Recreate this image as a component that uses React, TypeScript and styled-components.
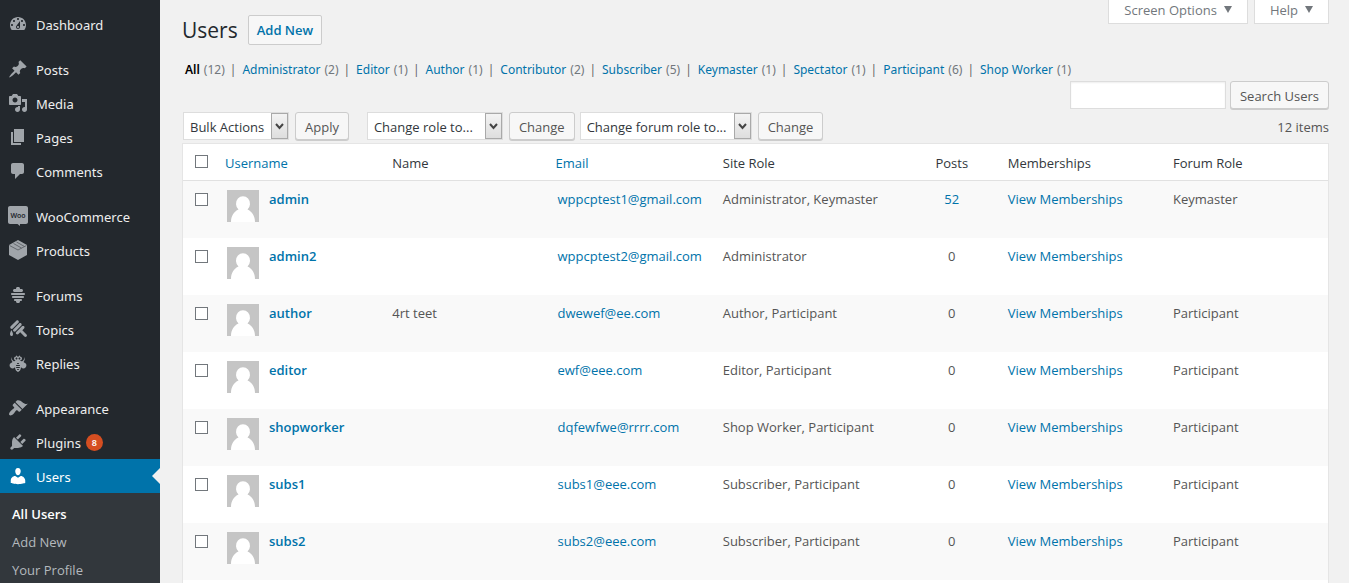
import React from "react";
import styled, { createGlobalStyle, css } from "styled-components";

const GlobalStyle = createGlobalStyle`
  * { box-sizing: border-box; }
  body {
    margin: 0;
    background: #f1f1f1;
    color: #444;
    font-family: "Open Sans", "Noto Sans", sans-serif;
    font-size: 13px;
    line-height: 18px;
  }
  a { color: #0073aa; text-decoration: none; }
  ul { list-style: none; margin: 0; padding: 0; }
`;

/* ---------- shell ---------- */

const Shell = styled.div`
  display: flex;
  height: 100vh;
  overflow: hidden;
`;

const Sidebar = styled.nav`
  flex: none;
  width: 160px;
  padding-top: 7px;
  background: #23282d;
`;

const MenuItem = styled.li<{ $first?: boolean }>`
  ${(p) => p.$first && css`margin-top: 11px;`}
`;

const MenuLink = styled.a<{ $current?: boolean }>`
  display: flex;
  align-items: center;
  height: 34px;
  padding: 0 0 0 8px;
  color: ${(p) => (p.$current ? "#fff" : "#eee")};
  background: ${(p) => (p.$current ? "#0073aa" : "transparent")};
  fill: ${(p) => (p.$current ? "#fff" : "#a0a5aa")};
  font-family: "Noto Sans", "Open Sans", sans-serif;
  ${(p) =>
    p.$current &&
    css`
      &::after {
        content: "";
        margin-left: auto;
        border: 8px solid transparent;
        border-right-color: #f1f1f1;
      }
    `}
`;

const MenuIcon = styled.svg`
  flex: none;
  width: 20px;
  height: 20px;
`;

const MenuLabel = styled.span`
  padding: 2px 5px 0 8px;
`;

const CountBadge = styled.span`
  min-width: 17px;
  border-radius: 9px;
  background: #d54e21;
  color: #fff;
  font-size: 9px;
  font-weight: 600;
  line-height: 17px;
  text-align: center;
`;

const SubMenu = styled.ul`
  padding: 7px 0;
  background: #32373c;
`;

const SubLink = styled.a<{ $current?: boolean }>`
  display: block;
  padding: 5px 12px;
  font-weight: ${(p) => (p.$current ? 600 : 400)};
  color: ${(p) => (p.$current ? "#fff" : "#b4b9be")};
`;

const Main = styled.main`
  flex: 1;
  min-width: 0;
  display: flex;
  flex-direction: column;
  padding: 0 20px 0 22px;
`;

/* ---------- page head ---------- */

const PageHead = styled.header`
  display: flex;
  align-items: flex-start;
  height: 58px;
`;

const Title = styled.h1`
  margin: 0;
  padding-top: 15px;
  color: #23282d;
  font-size: 21px;
  font-weight: 400;
  line-height: 30px;
`;

const AddNew = styled.a`
  margin: 15px auto 0 10px;
  padding: 5px 8px;
  border: 1px solid #ccc;
  border-radius: 2px;
  background: #f7f7f7;
  font-weight: 600;
`;

const MetaTabs = styled.div`
  display: flex;
  gap: 6px;
`;

const MetaTab = styled.button`
  display: flex;
  align-items: center;
  gap: 7px;
  height: 24px;
  padding: 0 15px 4px;
  border: 1px solid #ddd;
  border-top: 0;
  background: #fff;
  color: #72777c;
  font: inherit;

  &::after {
    content: "";
    border: 4px solid transparent;
    border-top: 7px solid #72777c;
    border-bottom: 0;
  }
`;

const Filters = styled.ul`
  display: flex;
  height: 23px;
  padding: 3px 3px 0;
  font-family: "Noto Sans", "Open Sans", sans-serif;
  font-size: 12px;
`;

const Filter = styled.li`
  display: flex;
  gap: 4px;
  & + &::before {
    content: "|";
    margin: 0 2px 0 5px;
    color: #666;
  }
`;

const FilterLink = styled.a<{ $current?: boolean }>`
  ${(p) => p.$current && css`color: #000; font-weight: 600;`}
`;

const FilterCount = styled.span`
  color: #72777c;
`;

/* ---------- controls ---------- */

const Button = styled.button`
  height: 28px;
  padding: 1px 9px 0;
  border: 1px solid #ccc;
  border-radius: 3px;
  background: #f7f7f7;
  box-shadow: 0 1px 0 #ccc;
  color: #555;
  font: inherit;
  white-space: nowrap;
`;

const SearchRow = styled.form`
  display: flex;
  justify-content: flex-end;
  gap: 4px;
`;

const SearchInput = styled.input`
  width: 156px;
  height: 28px;
  border: 1px solid #ddd;
  background: #fff;
  box-shadow: inset 0 1px 2px rgba(0, 0, 0, 0.07);
  font: inherit;
`;

const Toolbar = styled.div`
  display: flex;
  align-items: center;
  height: 28px;
  margin: 3px 0;
  padding-left: 1px;
`;

const Group = styled.div<{ $gap: number }>`
  display: flex;
  gap: 6px;
  margin-right: ${(p) => p.$gap}px;
`;

const SelectBox = styled.label<{ $width: number }>`
  display: grid;
  grid-template-columns: 1fr 17px;
  width: ${(p) => p.$width}px;
  height: 28px;
  border: 1px solid #ddd;
  background: #fff;
`;

const Select = styled.select`
  grid-area: 1 / 1 / 2 / 3;
  min-width: 0;
  padding: 2px 0 0 6px;
  border: 0;
  background: transparent;
  appearance: none;
  color: #32373c;
  font: inherit;
`;

const DropMark = styled.svg`
  grid-area: 1 / 2;
  width: 17px;
  height: 26px;
  border: 1px solid #a9a9a9;
  background: linear-gradient(#f3f3f3, #dedede);
  pointer-events: none;
`;

const ItemCount = styled.span`
  margin-left: auto;
  padding-top: 2px;
  color: #555;
`;

/* ---------- table ---------- */

const Panel = styled.section`
  flex: 1;
  border: 1px solid #e5e5e5;
  border-bottom: 0;
  background: #fff;
`;

const Table = styled.table`
  width: 100%;
  table-layout: fixed;
  border-collapse: separate;
  border-spacing: 0;
`;

const Col = styled.col<{ $width?: number }>`
  ${(p) => p.$width && css`width: ${p.$width}px;`}
`;

const HeadCell = styled.th<{ $align?: string; $sortable?: boolean }>`
  height: 37px;
  padding: 2px 8px 0 ${(p) => (p.$sortable ? 6 : 8)}px;
  border-bottom: 1px solid #e1e1e1;
  color: #32373c;
  font-weight: 400;
  text-align: ${(p) => p.$align || "left"};
`;

const Row = styled.tr`
  height: 57px;
  &:nth-child(odd) { background: #f9f9f9; }
`;

const Cell = styled.td<{ $align?: string }>`
  padding: 9px 8px;
  color: #555;
  text-align: ${(p) => p.$align || "left"};
  vertical-align: top;
  white-space: nowrap;
`;

const Check = styled.input`
  display: block;
  width: 13px;
  height: 13px;
  margin: 3px 0 0 4px;
  border: 1px solid #72777c;
  background: #fff;
  appearance: none;
`;

const HeadCheck = styled(Check)`
  margin-top: 0;
  margin-bottom: 4px;
`;

const UserBox = styled.div`
  display: flex;
  gap: 10px;
`;

const Avatar = styled.svg`
  flex: none;
  width: 32px;
  height: 32px;
`;

const UserLink = styled.a`
  font-weight: 600;
`;

/* ---------- data ---------- */

const icons: Record<string, React.ReactNode> = {
  dashboard: <path d="M3.76 16h12.48c1.1-1.37 1.76-3.11 1.76-5 0-4.42-3.58-8-8-8s-8 3.58-8 8c0 1.89.66 3.63 1.76 5zM10 4c.55 0 1 .45 1 1s-.45 1-1 1-1-.45-1-1 .45-1 1-1zM6 6c.55 0 1 .45 1 1s-.45 1-1 1-1-.45-1-1 .45-1 1-1zm8 0c.55 0 1 .45 1 1s-.45 1-1 1-1-.45-1-1 .45-1 1-1zm-5.37 5.55L12 7v6c0 1.1-.9 2-2 2s-2-.9-2-2c0-.57.24-1.08.63-1.45zM4 10c.55 0 1 .45 1 1s-.45 1-1 1-1-.45-1-1 .45-1 1-1zm12 0c.55 0 1 .45 1 1s-.45 1-1 1-1-.45-1-1 .45-1 1-1zm-5 3c0-.55-.45-1-1-1s-1 .45-1 1 .45 1 1 1 1-.45 1-1z" />,
  posts: <path d="M10.44 3.02l1.82-1.82 6.36 6.35-1.83 1.82c-1.05-.68-2.48-.57-3.41.36l-.75.75c-.92.93-1.04 2.35-.35 3.41l-1.83 1.82-2.41-2.41-2.8 2.79c-.42.42-3.38 2.71-3.8 2.29s1.86-3.39 2.28-3.81l2.79-2.79L4.1 9.36l1.83-1.82c1.05.69 2.48.57 3.4-.36l.75-.75c.93-.92 1.05-2.35.36-3.41z" />,
  media: <path d="M13 11V4c0-.55-.45-1-1-1h-1.67L9 1H5L3.67 3H2c-.55 0-1 .45-1 1v7c0 .55.45 1 1 1h10c.55 0 1-.45 1-1zM7 4.5c1.38 0 2.5 1.12 2.5 2.5S8.38 9.5 7 9.5 4.5 8.38 4.5 7 5.62 4.5 7 4.5zM14 6h5v10.5c0 1.38-1.12 2.5-2.5 2.5S14 17.88 14 16.5s1.12-2.5 2.5-2.5c.17 0 .34.02.5.05V9h-3V6zm-4 8.05V13h2v3.5c0 1.38-1.12 2.5-2.5 2.5S7 17.88 7 16.5 8.12 14 9.5 14c.17 0 .34.02.5.05z" />,
  pages: <path d="M6 15V2h10v13H6zm-1 1h8v2H3V5h2v11z" />,
  comments: <path d="M5 2h9c1.1 0 2 .9 2 2v7c0 1.1-.9 2-2 2h-2l-5 5v-5H5c-1.1 0-2-.9-2-2V4c0-1.1.9-2 2-2z" />,
  woo: (
    <>
      <path d="M2 0h16c1.1 0 2 .9 2 2v14c0 1.100-.9 2-2 2h-6v2l-2.500-2H2c-1.100 0-2-.9-2-2V2C0 .9.9 0 2 0z" />
      <text x="10" y="12" textAnchor="middle" fontSize="7" fontWeight="600" fill="#23282d">Woo</text>
    </>
  ),
  products: (
    <>
      <path d="M10 0l9 5v10l-9 5-9-5V5z" />
      <path d="M1.500 5.500L10 10l8.500-4.500M5.500 3.500l8 4.500M8.500 2l8 4.500" fill="none" stroke="#4a4f54" strokeWidth="0.700" />
    </>
  ),
  forums: <path d="M13.5 7h-7C5.67 7 5 6.33 5 5.5S5.67 4 6.5 4h1.59C8.04 3.84 8 3.68 8 3.5 8 2.67 8.67 2 9.5 2h1c.83 0 1.500.67 1.500 1.500 0 .18-.04.34-.09.5h1.590c.83 0 1.500.67 1.500 1.500S14.330 7 13.500 7zM4 8h12c.55 0 1 .45 1 1s-.45 1-1 1H4c-.55 0-1-.45-1-1s.45-1 1-1zm1 3h10c.55 0 1 .45 1 1s-.45 1-1 1H5c-.55 0-1-.45-1-1s.45-1 1-1zm2 3h6c.55 0 1 .45 1 1s-.45 1-1 1h-1.090c.05.16.09.32.09.5 0 .83-.67 1.500-1.500 1.500h-1c-.83 0-1.500-.67-1.500-1.500 0-.18.04-.34.09-.5H7c-.55 0-1-.45-1-1s.45-1 1-1z" />,
  topics: <path d="M10.44 1.66c-.59-.58-1.54-.58-2.12 0L2.66 7.32c-.58.58-.58 1.53 0 2.12.6.6 1.56.56 2.12 0l5.66-5.66c.58-.58.59-1.53 0-2.12zm2.83 2.83c-.59-.59-1.54-.59-2.12 0l-5.66 5.66c-.59.58-.59 1.53 0 2.12.6.6 1.56.55 2.12 0l5.66-5.66c.58-.58.58-1.53 0-2.12zm1.06 6.72l4.18 4.18c.59.58.59 1.53 0 2.12s-1.54.59-2.12 0l-4.18-4.18-1.77 1.77c-.59.58-1.54.58-2.12 0-.59-.59-.59-1.54 0-2.13l5.66-5.65c.58-.59 1.53-.59 2.12 0 .58.58.58 1.53 0 2.12zM5 15c0-1.59-1.66-4-1.66-4S2 13.78 2 15s.6 2 1.34 2h.32C4.4 17 5 16.59 5 15z" />,
  replies: <path d="M17.54 10.29c1.17 1.17 1.17 3.08 0 4.25-1.18 1.17-3.08 1.17-4.25 0l-.34-.52c0 3.66-2 4.38-2.95 4.98-.82-.6-2.95-1.28-2.95-4.98l-.34.52c-1.17 1.17-3.07 1.17-4.25 0-1.17-1.17-1.17-3.08 0-4.25 0 0 1.02-.67 2.1-1.3C3.71 7.84 3.2 6.42 3.2 4.88c0-.34.03-.67.08-1C3.53 5.66 4.47 7.22 5.8 8.3c.67-.35 1.85-.83 2.37-.92H8c-1.1 0-2-.9-2-2s.9-2 2-2v-.5c0-.28.22-.5.5-.5s.5.22.5.5v.5h2v-.5c0-.28.22-.5.5-.5s.5.22.5.5v.5c1.1 0 2 .9 2 2s-.9 2-2 2h-.17c.51.09 1.78.61 2.38.92 1.33-1.08 2.27-2.64 2.52-4.42.05.33.08.66.08 1 0 1.54-.51 2.96-1.36 4.11 1.08.63 2.09 1.3 2.09 1.3zM8.5 6.38c.5 0 1-.5 1-1s-.5-1-1-1-1 .5-1 1 .5 1 1 1zm3-2c-.5 0-1 .5-1 1s.5 1 1 1 1-.5 1-1-.5-1-1-1zm-2.3 5.73c-.12.11-.19.26-.19.43.02.25.23.46.49.46h1c.26 0 .47-.21.49-.46 0-.15-.07-.29-.19-.43-.08-.06-.18-.11-.3-.11h-1c-.12 0-.22.05-.3.11zM12 12.5c0-.12-.06-.28-.19-.38-.09-.07-.19-.12-.31-.12h-3c-.12 0-.22.05-.31.12-.11.1-.19.25-.19.38 0 .28.22.5.5.5h3c.28 0 .5-.22.5-.5zM8.5 15h3c.28 0 .5-.22.5-.5s-.22-.5-.5-.5h-3c-.28 0-.5.22-.5.5s.22.5.5.5zm1 2h1c.28 0 .5-.22.5-.5s-.22-.5-.5-.5h-1c-.28 0-.5.22-.5.5s.22.5.5.5z" />,
  appearance: <path d="M14.48 11.06L7.41 3.99l1.5-1.5c.5-.56 2.3-.47 3.51.32 1.21.8 1.43 1.28 2.91 2.1 1.18.64 2.45 1.26 4.45.85zm-.71.71L6.7 4.7 4.93 6.47c-.39.39-.39 1.02 0 1.41l1.06 1.06c.39.39.39 1.03 0 1.42-.6.6-1.43 1.11-2.21 1.69-.35.26-.7.53-1.01.84C1.43 14.23.4 16.08 1.4 17.07c.99 1 2.84-.03 4.18-1.36.31-.31.58-.66.85-1.02.57-.78 1.08-1.61 1.69-2.21.39-.39 1.02-.39 1.41 0l1.06 1.06c.39.39 1.02.39 1.41 0z" />,
  plugins: <path d="M13.11 4.36L9.87 7.6 8 5.73l3.24-3.24c.35-.34 1.05-.2 1.56.32.52.51.66 1.21.31 1.55zm-8 1.77l.91-1.12 9.01 9.01-1.19.84c-.71.71-2.63 1.16-3.82 1.16H6.14L4.9 17.26c-.59.59-1.54.59-2.12 0-.59-.58-.59-1.53 0-2.12l1.24-1.24v-3.88c0-1.13.4-3.19 1.09-3.89zm7.26 3.97l3.24-3.24c.34-.35 1.04-.21 1.55.31.52.51.66 1.21.31 1.55l-3.24 3.25z" />,
  users: <path d="M10 9.25c-2.27 0-2.73-3.44-2.73-3.44C7 4.02 7.82 2 9.97 2c2.16 0 2.98 2.02 2.71 3.81 0 0-.41 3.44-2.68 3.44zm0 2.57L12.72 10c2.39 0 4.52 2.33 4.52 4.53v2.49s-3.65 1.13-7.24 1.13c-3.65 0-7.24-1.13-7.24-1.13v-2.49c0-2.25 1.94-4.48 4.47-4.48z" />,
};

const menu: { icon: string; label: string; first?: boolean; count?: number }[] = [
  { icon: "dashboard", label: "Dashboard" },
  { icon: "posts", label: "Posts", first: true },
  { icon: "media", label: "Media" },
  { icon: "pages", label: "Pages" },
  { icon: "comments", label: "Comments" },
  { icon: "woo", label: "WooCommerce", first: true },
  { icon: "products", label: "Products" },
  { icon: "forums", label: "Forums", first: true },
  { icon: "topics", label: "Topics" },
  { icon: "replies", label: "Replies" },
  { icon: "appearance", label: "Appearance", first: true },
  { icon: "plugins", label: "Plugins", count: 8 },
  { icon: "users", label: "Users" },
];

const filters: [string, number][] = [
  ["All", 12],
  ["Administrator", 2],
  ["Editor", 1],
  ["Author", 1],
  ["Contributor", 2],
  ["Subscriber", 5],
  ["Keymaster", 1],
  ["Spectator", 1],
  ["Participant", 6],
  ["Shop Worker", 1],
];

const users = [
  { login: "admin", name: "", email: "wppcptest1@gmail.com", role: "Administrator, Keymaster", posts: 52, forum: "Keymaster" },
  { login: "admin2", name: "", email: "wppcptest2@gmail.com", role: "Administrator", posts: 0, forum: "" },
  { login: "author", name: "4rt teet", email: "dwewef@ee.com", role: "Author, Participant", posts: 0, forum: "Participant" },
  { login: "editor", name: "", email: "ewf@eee.com", role: "Editor, Participant", posts: 0, forum: "Participant" },
  { login: "shopworker", name: "", email: "dqfewfwe@rrrr.com", role: "Shop Worker, Participant", posts: 0, forum: "Participant" },
  { login: "subs1", name: "", email: "subs1@eee.com", role: "Subscriber, Participant", posts: 0, forum: "Participant" },
  { login: "subs2", name: "", email: "subs2@eee.com", role: "Subscriber, Participant", posts: 0, forum: "Participant" },
];

function DropDown({ label, width }: { label: string; width: number }) {
  return (
    <SelectBox $width={width}>
      <Select aria-label={label}>
        <option>{label}</option>
      </Select>
      <DropMark viewBox="0 0 15 24" aria-hidden="true">
        <path d="M4 10l3.500 4L11 10" fill="none" stroke="#444" strokeWidth="2" />
      </DropMark>
    </SelectBox>
  );
}

export default function App() {
  return (
    <>
      <GlobalStyle />
      <Shell>
        <Sidebar aria-label="Main menu">
          <ul>
            {menu.map((m) => (
              <MenuItem key={m.label} $first={m.first}>
                <MenuLink href="#" $current={m.label === "Users"}>
                  <MenuIcon viewBox="0 0 20 20" aria-hidden="true">{icons[m.icon]}</MenuIcon>
                  <MenuLabel>{m.label}</MenuLabel>
                  {m.count && <CountBadge>{m.count}</CountBadge>}
                </MenuLink>
              </MenuItem>
            ))}
          </ul>
          <SubMenu>
            <li><SubLink href="#" $current>All Users</SubLink></li>
            <li><SubLink href="#">Add New</SubLink></li>
            <li><SubLink href="#">Your Profile</SubLink></li>
          </SubMenu>
        </Sidebar>
        <Main>
          <PageHead>
            <Title>Users</Title>
            <AddNew href="#">Add New</AddNew>
            <MetaTabs>
              <MetaTab type="button">Screen Options</MetaTab>
              <MetaTab type="button">Help</MetaTab>
            </MetaTabs>
          </PageHead>
          <Filters>
            {filters.map(([label, count]) => (
              <Filter key={label}>
                <FilterLink href="#" $current={label === "All"}>{label}</FilterLink>
                <FilterCount>({count})</FilterCount>
              </Filter>
            ))}
          </Filters>
          <SearchRow>
            <SearchInput type="search" aria-label="Search Users" />
            <Button type="button">Search Users</Button>
          </SearchRow>
          <Toolbar>
            <Group $gap={18}>
              <DropDown label="Bulk Actions" width={106} />
              <Button type="button">Apply</Button>
            </Group>
            <Group $gap={5}>
              <DropDown label="Change role to..." width={136} />
              <Button type="button">Change</Button>
            </Group>
            <Group $gap={0}>
              <DropDown label="Change forum role to..." width={172} />
              <Button type="button">Change</Button>
            </Group>
            <ItemCount>12 items</ItemCount>
          </Toolbar>
          <Panel>
            <Table>
              <colgroup>
                <Col $width={36} />
                <Col />
                <Col />
                <Col />
                <Col $width={189} />
                <Col $width={96} />
                <Col />
                <Col $width={163} />
              </colgroup>
              <thead>
                <tr>
                  <HeadCell><HeadCheck type="checkbox" aria-label="Select all" /></HeadCell>
                  <HeadCell $sortable><a href="#">Username</a></HeadCell>
                  <HeadCell>Name</HeadCell>
                  <HeadCell $sortable><a href="#">Email</a></HeadCell>
                  <HeadCell>Site Role</HeadCell>
                  <HeadCell $align="center">Posts</HeadCell>
                  <HeadCell>Memberships</HeadCell>
                  <HeadCell>Forum Role</HeadCell>
                </tr>
              </thead>
              <tbody>
                {users.map((u) => (
                  <Row key={u.login}>
                    <Cell><Check type="checkbox" aria-label={"Select " + u.login} /></Cell>
                    <Cell>
                      <UserBox>
                        <Avatar viewBox="0 0 32 32" aria-hidden="true">
                          <path d="M0 0h32v32H0z" fill="#c5c5c5" />
                          <path d="M4 32c0-6 3-10.500 7.500-12.500a7 7.500 0 1 1 9 0C25 21.500 28 26 28 32z" fill="#fff" />
                        </Avatar>
                        <UserLink href="#">{u.login}</UserLink>
                      </UserBox>
                    </Cell>
                    <Cell>{u.name}</Cell>
                    <Cell><a href="#">{u.email}</a></Cell>
                    <Cell>{u.role}</Cell>
                    <Cell $align="center">{u.posts ? <a href="#">{u.posts}</a> : u.posts}</Cell>
                    <Cell><a href="#">View Memberships</a></Cell>
                    <Cell>{u.forum}</Cell>
                  </Row>
                ))}
              </tbody>
            </Table>
          </Panel>
        </Main>
      </Shell>
    </>
  );
}
